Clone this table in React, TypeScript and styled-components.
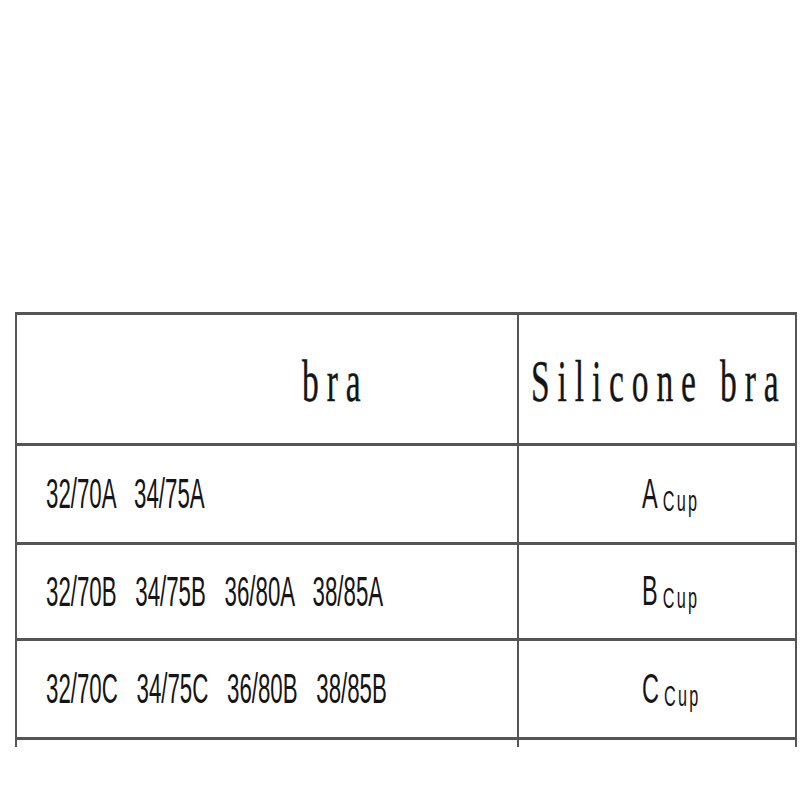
import styled, { createGlobalStyle } from "styled-components";

const GlobalStyle = createGlobalStyle`
    html, body {
        margin: 0;
        padding: 0;
        background: #fff;
    }
`;

const Page = styled.div`
    box-sizing: border-box;
    height: 800px;
    padding: 312px 0 0 15px;
    overflow: hidden;
    background: #fff;
`;

const Table = styled.div`
    box-sizing: border-box;
    width: 782px;
    border-top: 3px solid #555;
    border-left: 2px solid #555;
    border-right: 2px solid #555;
`;

const Row = styled.div<{ $h: number; $open?: boolean }>`
    box-sizing: border-box;
    display: grid;
    grid-template-columns: 502px 1fr;
    height: ${(p) => p.$h}px;
    border-bottom: ${(p) => (p.$open ? "none" : "3px solid #555")};
`;

const Cell = styled.div<{ $pad: number; $divider?: boolean }>`
    box-sizing: border-box;
    display: flex;
    align-items: center;
    padding-left: ${(p) => p.$pad}px;
    border-right: ${(p) => (p.$divider ? "2px solid #555" : "none")};
    min-width: 0;
    overflow: visible;
`;

const HeadText = styled.span`
    display: inline-block;
    font-family: "Liberation Serif", "Times New Roman", serif;
    font-size: 60px;
    line-height: 1;
    letter-spacing: 14px;
    color: #151515;
    white-space: nowrap;
    transform: scaleX(0.56);
    transform-origin: left center;
    margin-top: 4px;
    -webkit-text-stroke: 0.4px #151515;
`;

const Sizes = styled.span`
    display: inline-block;
    font-family: "Liberation Sans", Arial, sans-serif;
    font-size: 42px;
    line-height: 1;
    letter-spacing: 0;
    word-spacing: 6px;
    color: #151515;
    white-space: pre;
    transform: scaleX(0.53);
    transform-origin: left center;
`;

const CupLabel = styled.span`
    display: inline-block;
    font-family: "Liberation Sans", Arial, sans-serif;
    font-size: 42px;
    line-height: 1;
    color: #151515;
    white-space: nowrap;
    transform: scaleX(0.56);
    transform-origin: left center;
`;

const Cup = styled.span`
    font-size: 29px;
    letter-spacing: 4px;
    margin-left: 9px;
    vertical-align: -3px;
`;

const rows = [
    { sizes: "32/70A  34/75A", cup: "A", h: 99 },
    { sizes: "32/70B  34/75B  36/80A  38/85A", cup: "B", h: 96 },
    { sizes: "32/70C  34/75C  36/80B  38/85B", cup: "C", h: 99 },
];

function App() {
    return (
        <Page>
            <GlobalStyle />
            <Table>
                <Row $h={131}>
                    <Cell $pad={285} $divider>
                        <HeadText>bra</HeadText>
                    </Cell>
                    <Cell $pad={12}>
                        <HeadText>Silicone bra</HeadText>
                    </Cell>
                </Row>
                {rows.map((r) => (
                    <Row key={r.cup} $h={r.h}>
                        <Cell $pad={29} $divider>
                            <Sizes>{r.sizes}</Sizes>
                        </Cell>
                        <Cell $pad={123}>
                            <CupLabel>
                                {r.cup}
                                <Cup>Cup</Cup>
                            </CupLabel>
                        </Cell>
                    </Row>
                ))}
                <Row $h={7} $open>
                    <Cell $pad={0} $divider />
                    <Cell $pad={0} />
                </Row>
            </Table>
        </Page>
    );
}

export default App;
